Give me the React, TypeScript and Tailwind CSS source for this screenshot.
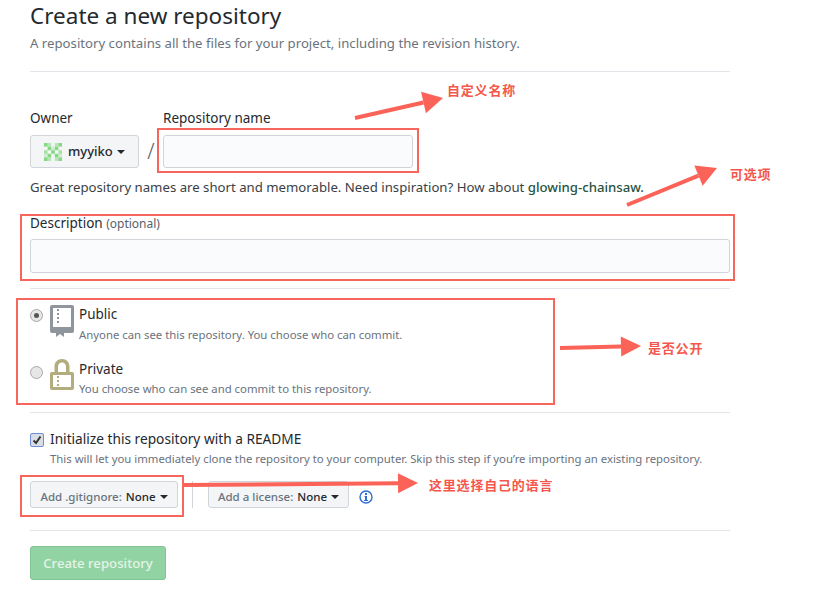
const font = { fontFamily: '"Noto Sans", "Noto Sans CJK SC", sans-serif' };

function Caret() {
  return <span className="ml-1 inline-block w-0 h-0 border-x-[4px] border-x-transparent border-t-[4px] border-t-[#24292e] align-middle" />;
}

function Identicon() {
  const cells = [
    [0, 0, 1], [0, 1, 0.55], [0, 3, 0.55], [0, 4, 1],
    [1, 1, 1], [1, 2, 0.3], [1, 3, 1],
    [2, 0, 0.7], [2, 2, 1], [2, 4, 0.7],
    [3, 1, 1], [3, 3, 1], [3, 0, 0.3], [3, 4, 0.3],
    [4, 0, 1], [4, 1, 0.55], [4, 3, 0.55], [4, 4, 1],
  ];
  return (
    <svg width="18" height="18" viewBox="0 0 5 5" className="shrink-0">
      {cells.map(([r, c, o], i) => (
        <rect key={i} x={c} y={r} width="1" height="1" fill="#86d983" opacity={o} />
      ))}
    </svg>
  );
}

function BookIcon() {
  return (
    <svg width="24" height="32" viewBox="0 0 24 32" className="shrink-0">
      <path fillRule="evenodd" d="M2 0h20a2 2 0 0 1 2 2v24a2 2 0 0 1-2 2h-8v-2H6v2H2a2 2 0 0 1-2-2V2a2 2 0 0 1 2-2zm1 3v19h18V3H3z" fill="#8f959d" />
      <path d="M7 4h2v2H7zM7 8h2v2H7zM7 12h2v2H7zM7 16h2v2H7z" fill="#8f959d" />
      <path d="M6 25h8v7l-4-3-4 3z" fill="#8f959d" />
    </svg>
  );
}

function LockIcon() {
  return (
    <svg width="24" height="31" viewBox="0 0 24 31" className="shrink-0">
      <path fillRule="evenodd" d="M12 0c4.600 0 7.500 3.200 7.500 8v5H22a2 2 0 0 1 2 2v14a2 2 0 0 1-2 2H2a2 2 0 0 1-2-2V15a2 2 0 0 1 2-2h2.500V8c0-4.800 2.900-8 7.500-8zM8 13h8V8c0-2.800-1.500-4.500-4-4.500S8 5.200 8 8v5zM3 16v12h18V16H3z" fill="#b3ac7c" />
      <path d="M7 17h2v2H7zM7 21h2v2H7zM7 25h2v2H7z" fill="#b3ac7c" />
    </svg>
  );
}

function Arrow({ x1, y1, x2, y2, w, h }: { x1: number; y1: number; x2: number; y2: number; w: number; h: number }) {
  const a = Math.atan2(y2 - y1, x2 - x1);
  const bx = x2 - Math.cos(a) * h;
  const by = y2 - Math.sin(a) * h;
  const nx = -Math.sin(a) * w;
  const ny = Math.cos(a) * w;
  return (
    <g>
      <line x1={x1} y1={y1} x2={bx} y2={by} stroke="#fb6358" strokeWidth="4" />
      <polygon points={`${x2},${y2} ${bx + nx},${by + ny} ${bx - nx},${by - ny}`} fill="#fb6358" />
    </g>
  );
}

function Note({ className, children }: { className: string; children: string }) {
  return (
    <div className={`absolute text-[13px] leading-[18px] font-bold tracking-[0.8px] text-[#f4574c] whitespace-nowrap ${className}`}>
      {children}
    </div>
  );
}

function Box({ className }: { className: string }) {
  return <div className={`absolute border-2 border-[#f7665c] ${className}`} />;
}

export default function App() {
  return (
    <div className="relative w-[833px] h-[591px] bg-white overflow-hidden text-[#24292e]" style={font}>
      <div className="w-[700px] ml-[30px]">
        <h1 className="h-[32px] text-[22.5px] leading-[32px] font-normal">Create a new repository</h1>
        <p className="mt-[3px] h-[18px] text-[13.2px] leading-[16px] text-[#6a737d]">
          A repository contains all the files for your project, including the revision history.
        </p>
        <div className="mt-[18px] border-t border-[#e1e4e8]" />

        <div className="mt-[37px] flex items-start">
          <div className="w-[109px]">
            <div className="h-[20px] text-[13.5px] leading-[18px]">Owner</div>
            <div className="mt-[6px] h-[33px] rounded-[3px] border border-[#d1d5da] bg-[#f3f5f7] flex items-center pl-[13px] text-[13px] font-medium">
              <Identicon />
              <span className="ml-[6px]">myyiko</span>
              <Caret />
            </div>
          </div>
          <div className="w-[24px] mt-[26px] h-[33px] text-[21px] leading-[33px] text-center text-[#586069] font-light">/</div>
          <div>
            <div className="h-[20px] text-[13.5px] leading-[18px]">Repository name</div>
            <div className="mt-[6px] w-[250px] h-[33px] rounded-[3px] border border-[#d1d5da] bg-[#fafbfc]" />
          </div>
        </div>

        <p className="mt-[11px] h-[18px] text-[13.2px] leading-[16px] text-[#3b4046] whitespace-nowrap">
          Great repository names are short and memorable. Need inspiration? How about{" "}
          <span className="font-medium text-[#28543f]">glowing-chainsaw.</span>
        </p>

        <div className="mt-[17px] h-[20px] text-[13.5px] leading-[18px]">
          Description <span className="text-[12px] text-[#586069]">(optional)</span>
        </div>
        <div className="mt-[5px] h-[34px] rounded-[3px] border border-[#d1d5da] bg-[#fafbfc]" />
        <div className="mt-[15px] border-t border-[#e1e4e8]" />

        <div className="mt-[16px] flex items-start">
          <div className="mt-[4px] w-[13px] h-[13px] rounded-full border border-[#a9a9a9] bg-[#e6e6e6] flex items-center justify-center">
            <div className="w-[5px] h-[5px] rounded-full bg-[#555]" />
          </div>
          <div className="ml-[7px]"><BookIcon /></div>
          <div className="ml-[5px]">
            <div className="h-[20px] text-[13.5px] leading-[18px]">Public</div>
            <div className="mt-[1px] h-[18px] text-[11.35px] leading-[18px] text-[#6a737d]">Anyone can see this repository. You choose who can commit.</div>
          </div>
        </div>

        <div className="mt-[15px] flex items-start">
          <div className="mt-[7px] w-[13px] h-[13px] rounded-full border border-[#a9a9a9] bg-[#e6e6e6]" />
          <div className="ml-[7px]"><LockIcon /></div>
          <div className="ml-[5px]">
            <div className="mt-[1px] h-[20px] text-[13.5px] leading-[18px]">Private</div>
            <div className="h-[18px] text-[11.35px] leading-[18px] text-[#6a737d]">You choose who can see and commit to this repository.</div>
          </div>
        </div>

        <div className="mt-[14px] border-t border-[#e1e4e8]" />

        <div className="mt-[17px] flex items-center h-[20px]">
          <div className="w-[14px] h-[14px] -mt-[1px] rounded-[2px] border border-[#6d8fd6] bg-[#d9dde4] flex items-center justify-center">
            <svg width="10" height="10" viewBox="0 0 10 10">
              <path d="M1.500 5.500 4 8l4.500-6.500" fill="none" stroke="#333" strokeWidth="2" />
            </svg>
          </div>
          <div className="ml-[6px] h-[20px] text-[13.7px] leading-[18px]">Initialize this repository with a README</div>
        </div>
        <div className="ml-[20px] mt-[1px] h-[18px] text-[11.35px] leading-[16px] text-[#6a737d] whitespace-nowrap">
          This will let you immediately clone the repository to your computer. Skip this step if you’re importing an existing repository.
        </div>

        <div className="mt-[12px] flex items-center h-[27px]">
          <div className="w-[148px] h-[27px] pt-[4px] rounded-[3px] border border-[#d1d5da] bg-[#f3f5f7] flex items-center justify-center text-[11.5px] font-medium text-[#6a737d]">
            Add .gitignore:<span className="ml-1 text-[#24292e]">None</span><Caret />
          </div>
          <div className="ml-[14px] h-[27px] border-l border-[#d1d5da]" />
          <div className="ml-[15px] w-[141px] h-[27px] pt-[4px] rounded-[3px] border border-[#d1d5da] bg-[#f3f5f7] flex items-center justify-center text-[11.5px] font-medium text-[#6a737d]">
            Add a license:<span className="ml-1 text-[#24292e]">None</span><Caret />
          </div>
          <svg width="14" height="14" viewBox="0 0 14 14" className="ml-[10px] mt-[4px]">
            <circle cx="7" cy="7" r="6" fill="none" stroke="#2f6fd0" strokeWidth="1.400" />
            <path d="M6 3h2v2H6zM5.500 6h2.500v4h1v1H5v-1h1V7h-.5z" fill="#2f6fd0" />
          </svg>
        </div>

        <div className="mt-[22px] border-t border-[#e1e4e8]" />

        <div className="mt-[15px] w-[136px] h-[34px] pt-[1px] rounded-[3px] border border-[#7fc596] bg-[#92d3a3] flex items-center justify-center text-[13.2px] font-medium text-[#e4f4e8]">
          Create repository
        </div>
      </div>

      <Box className="left-[157px] top-[128px] w-[262px] h-[45px]" />
      <Box className="left-[20px] top-[214px] w-[715px] h-[67px]" />
      <Box className="left-[16px] top-[298px] w-[539px] h-[107px]" />
      <Box className="left-[20px] top-[475px] w-[164px] h-[42px]" />

      <svg width="833" height="591" className="absolute left-0 top-0 pointer-events-none">
        <Arrow x1={355} y1={118} x2={443} y2={98} w={11} h={20} />
        <Arrow x1={627} y1={205} x2={717} y2={168} w={11} h={20} />
        <Arrow x1={560} y1={348} x2={641} y2={346} w={10} h={20} />
        <Arrow x1={184} y1={485} x2={418} y2={483} w={10} h={20} />
      </svg>

      <Note className="left-[447px] top-[81px]">自定义名称</Note>
      <Note className="left-[730px] top-[165px]">可选项</Note>
      <Note className="left-[648px] top-[339px]">是否公开</Note>
      <Note className="left-[429px] top-[476px]">这里选择自己的语言</Note>
    </div>
  );
}
